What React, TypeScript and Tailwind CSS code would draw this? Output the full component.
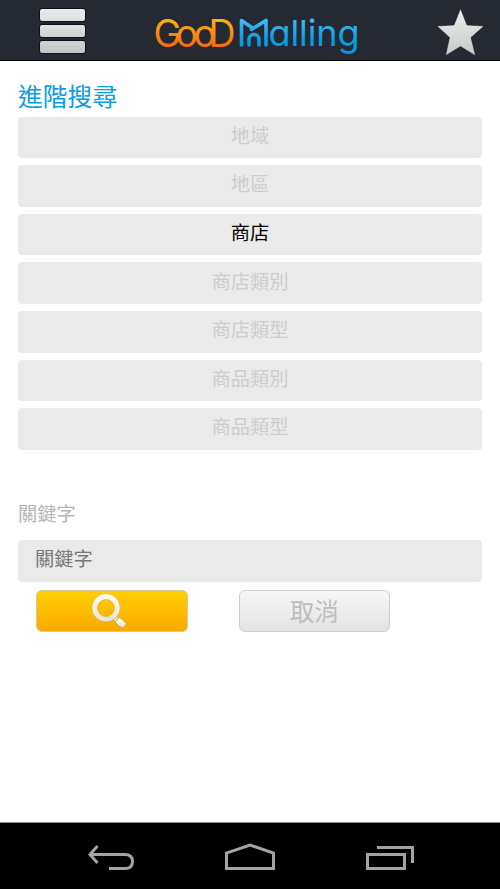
const FILTERS = [
  { label: "地域", active: false },
  { label: "地區", active: false },
  { label: "商店", active: true },
  { label: "商店類別", active: false },
  { label: "商店類型", active: false },
  { label: "商品類別", active: false },
  { label: "商品類型", active: false },
];

function Logo() {
  return (
    <svg width="206" height="48" viewBox="0 0 206 48" aria-label="GooD Malling">
      <defs>
        <linearGradient id="warm" gradientUnits="userSpaceOnUse" x1="0" y1="10" x2="0" y2="40">
          <stop offset="0" stopColor="#fcb514" />
          <stop offset="1" stopColor="#f4660c" />
        </linearGradient>
        <linearGradient id="cool" gradientUnits="userSpaceOnUse" x1="0" y1="10" x2="0" y2="46">
          <stop offset="0" stopColor="#4cbcf0" />
          <stop offset="0.6" stopColor="#069ee4" />
          <stop offset="1" stopColor="#0797dd" />
        </linearGradient>
      </defs>
      <text
        x="-0.5 21.5 39.5 54.5"
        y="38.5"
        fontSize="37.5"
        fill="url(#warm)"
        className="font-['Inter',sans-serif] font-normal"
      >
        GooD
      </text>
      {/* building mark */}
      <path
        d="M87.500 37V12.500L97 19M97.500 21.500L112 12.500V37M95 37V31.500A5 5 0 0 1 105 31.500V37"
        fill="none"
        stroke="url(#cool)"
        strokeWidth="3.6"
        strokeLinecap="round"
        strokeLinejoin="round"
      />
      <text
        x="114.500"
        y="38"
        fontSize="36"
        textLength="91"
        fill="url(#cool)"
        className="font-['Inter',sans-serif] font-normal [font-feature-settings:'cv11']"
      >
        alling
      </text>
    </svg>
  );
}

function Header() {
  return (
    <header className="flex h-[61px] items-start border-b border-black bg-[#252932] pr-[15px] pl-[39px]">
      <div className="mt-2 flex w-[47px] flex-col gap-0.5">
        <div className="h-3.5 rounded-[3px] border border-[#0c101b] bg-linear-to-b from-[#ececee] to-[#dedfe0]" />
        <div className="h-3.5 rounded-[3px] border border-[#0c101b] bg-linear-to-b from-[#dfe1e0] to-[#d0d2d1]" />
        <div className="h-3.5 rounded-[3px] border border-[#0c101b] bg-linear-to-b from-[#d0d2d1] to-[#c3c5c4]" />
      </div>
      <div className="mt-2 ml-[68px]">
        <Logo />
      </div>
      <svg className="mt-2 ml-auto" width="49" height="49" viewBox="0 0 49 49">
        <defs>
          <linearGradient id="star" x1="0" y1="0" x2="0" y2="1">
            <stop offset="0" stopColor="#eeeeef" />
            <stop offset="1" stopColor="#c6c8c7" />
          </linearGradient>
        </defs>
        <path
          d="M24.5 .6L31 17L48 18L35 29.5L39.5 47.8L24.5 38.5L9.5 47.8L13.5 29.5L1 18L18 17Z"
          fill="url(#star)"
          stroke="#11151e"
          strokeWidth=".5"
        />
      </svg>
    </header>
  );
}

function SearchIcon() {
  return (
    <svg width="36" height="36" viewBox="0 0 36 36">
      <defs>
        <linearGradient id="lens" x1="0" y1="0" x2="0" y2="1">
          <stop offset="0" stopColor="#fffef5" />
          <stop offset="1" stopColor="#e4e1d5" />
        </linearGradient>
      </defs>
      <path d="M23 24L26 27" stroke="#e8e4d3" strokeWidth="4" />
      <path
        d="M24 29L28.500 24.500Q33 27 35.500 31L31.500 35Q27 33 24 29Z"
        fill="url(#lens)"
        stroke="#c89b2a"
        strokeWidth=".7"
      />
      <path
        fillRule="evenodd"
        d="M15 .6A14.200 14.200 0 1 0 15 29A14.200 14.200 0 1 0 15 .6ZM15 6.500A8.500 8.500 0 1 1 15 23.500A8.500 8.500 0 1 1 15 6.500Z"
        fill="url(#lens)"
        stroke="#d79a12"
        strokeWidth=".5"
      />
    </svg>
  );
}

function NavBar() {
  return (
    <nav className="h-[67px] border-t border-[#8d8d8d] bg-black">
      <svg width="500" height="66" viewBox="0 0 500 66" fill="none" stroke="#a3a3a3" strokeWidth="3">
        <path d="M97.5 23L90 31.5L97.5 40M90 31.5H125Q132.500 31.500 132.500 38.500Q132.500 45.500 125 45.500H109" />
        <path d="M226.500 45.500V30L250 22L273.500 30V45.500Z" />
        <path d="M367.500 31.500H404.500V45.500H367.500ZM377 24.500H412.500V40" />
      </svg>
    </nav>
  );
}

function App() {
  return (
    <div className="flex h-[889px] w-[500px] flex-col overflow-hidden bg-white font-['Noto_Sans_CJK_TC',sans-serif]">
      <Header />

      <main className="flex-1 px-[18px]">
        <h1 className="flex h-[55.6px] items-center pt-3 text-[24.8px] leading-8 text-[#0a9ce4]">進階搜尋</h1>

        <div className="flex flex-col gap-[7px]">
          {FILTERS.map((filter) => (
            <button
              key={filter.label}
              className={`flex h-[41.6px] w-full items-center justify-center rounded-[4px] bg-[#eaeaea] pb-[5.2px] text-[19.3px] leading-6 ${
                filter.active ? "text-black" : "text-[#cccccc]"
              }`}
            >
              {filter.label}
            </button>
          ))}
        </div>

        <div className="mt-[49px] text-[19.3px] leading-7 text-[#b5b5b5]">關鍵字</div>
        <div className="mt-[13.4px] flex h-[41.6px] items-center rounded-[4px] bg-[#eaeaea] pb-[6px] pl-[17px] text-[19.3px] leading-6 text-[#777777]">
          關鍵字
        </div>

        <div className="mt-2 flex gap-[51px] pl-[18px]">
          <button className="flex h-[42px] w-[151.5px] items-center justify-center rounded-md border border-[#d8c79b] bg-linear-to-b from-[#ffd000] to-[#faa900] pr-1.5">
            <SearchIcon />
          </button>
          <button className="flex h-[42px] w-[151.5px] items-center justify-center rounded-md border border-[#cfcfcf] bg-linear-to-b from-[#f7f7f7] to-[#e3e3e3] text-[24.5px] leading-8 text-[#bdbdbd]">
            取消
          </button>
        </div>
      </main>

      <NavBar />
    </div>
  );
}

export default App;
